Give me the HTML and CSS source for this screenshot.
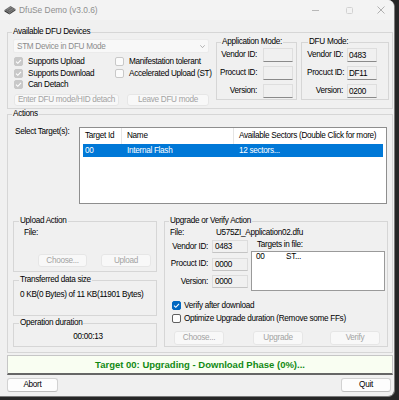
FILE: index.html
```html
<!DOCTYPE html>
<html lang="en">
<head>
<meta charset="utf-8">
<title>DfuSe Demo (v3.0.6)</title>
<link rel="stylesheet" href="styles.css">
</head>
<body>
<div class="window">
  <div class="titlebar">
    <svg class="app-icon" width="12" height="10" viewBox="0 0 12 10">
      <polygon points="0.5,5 6.5,1 11.5,4 5.5,8" fill="#6a6a6a"/>
      <polygon points="0.5,5 5.5,8 5.5,9.5 0.5,6.5" fill="#3a3a3a"/>
      <polygon points="5.5,8 11.5,4 11.5,5.5 5.5,9.5" fill="#4a4a4a"/>
      <path d="M3 4.6L7 2.1M5 5.9L9 3.4" stroke="#9a9a9a" stroke-width="0.6"/>
    </svg>
    <span class="title">DfuSe Demo (v3.0.6)</span>
    <div class="wincontrols">
      <svg class="wc-min" width="7" height="1" viewBox="0 0 7 1"><rect width="7" height="1" fill="#b8b8b8"/></svg>
      <svg class="wc-max" width="7" height="7" viewBox="0 0 7 7"><rect x="0.5" y="0.5" width="6" height="6" rx="1" fill="none" stroke="#d2d2d2"/></svg>
      <svg class="wc-close" width="8" height="8" viewBox="0 0 8 8"><path d="M0.5 0.5L7.5 7.5M7.5 0.5L0.5 7.5" stroke="#a8a8a8" stroke-width="0.9"/></svg>
    </div>
  </div>

  <div class="content">
    <fieldset class="group devices">
      <legend>Available DFU Devices</legend>
      <div class="devices-row">
        <div class="dev-left">
          <div class="combo">
            <span>STM Device in DFU Mode</span>
            <svg width="5" height="3" viewBox="0 0 5 3"><path d="M0.3 0.3L2.5 2.6L4.7 0.3" fill="none" stroke="#a0a0a0" stroke-width="0.8"/></svg>
          </div>
          <div class="checks">
            <div class="check"><span class="box box-dis"><svg width="7" height="7" viewBox="0 0 7 7"><path d="M1 3.6L2.8 5.3L6 1.8" fill="none" stroke="#fff" stroke-width="1.1"/></svg></span>Supports Upload</div>
            <div class="check"><span class="box"></span>Manifestation tolerant</div>
            <div class="check"><span class="box box-dis"><svg width="7" height="7" viewBox="0 0 7 7"><path d="M1 3.6L2.8 5.3L6 1.8" fill="none" stroke="#fff" stroke-width="1.1"/></svg></span>Supports Download</div>
            <div class="check"><span class="box"></span>Accelerated Upload (ST)</div>
            <div class="check"><span class="box box-dis"><svg width="7" height="7" viewBox="0 0 7 7"><path d="M1 3.6L2.8 5.3L6 1.8" fill="none" stroke="#fff" stroke-width="1.1"/></svg></span>Can Detach</div>
          </div>
          <div class="dev-buttons">
            <button class="btn btn-dis btn-enter" disabled>Enter DFU mode/HID detach</button>
            <button class="btn btn-dis btn-leave" disabled>Leave DFU mode</button>
          </div>
        </div>

        <fieldset class="group mode appmode">
          <legend>Application Mode:</legend>
          <div class="mode-grid">
            <span class="lbl">Vendor ID:</span><span class="field"></span>
            <span class="lbl">Procuct ID:</span><span class="field"></span>
            <span class="lbl">Version:</span><span class="field"></span>
          </div>
        </fieldset>

        <fieldset class="group mode dfumode">
          <legend>DFU Mode:</legend>
          <div class="mode-grid">
            <span class="lbl">Vendor ID:</span><span class="field">0483</span>
            <span class="lbl">Procuct ID:</span><span class="field">DF11</span>
            <span class="lbl">Version:</span><span class="field">0200</span>
          </div>
        </fieldset>
      </div>
    </fieldset>

    <fieldset class="group actions">
      <legend>Actions</legend>
      <div class="target-row">
        <span class="select-label">Select Target(s):</span>
        <div class="listbox">
          <div class="lb-head">
            <span>Target Id</span><span>Name</span><span>Available Sectors (Double Click for more)</span>
          </div>
          <div class="lb-row selected">
            <span>00</span><span>Internal Flash</span><span>12 sectors...</span>
          </div>
        </div>
      </div>

      <div class="lower-row">
        <div class="lower-left">
          <fieldset class="group upload">
            <legend>Upload Action</legend>
            <div class="upload-inner">
              <div class="line">File:</div>
              <div class="upload-buttons">
                <button class="btn btn-dis btn-choose" disabled>Choose...</button>
                <button class="btn btn-dis btn-upload" disabled>Upload</button>
              </div>
            </div>
          </fieldset>
          <fieldset class="group transferred">
            <legend>Transferred data size</legend>
            <div class="transferred-inner line">0 KB(0 Bytes) of 11 KB(11901 Bytes)</div>
          </fieldset>
          <fieldset class="group duration">
            <legend>Operation duration</legend>
            <div class="duration-inner line">00:00:13</div>
          </fieldset>
        </div>

        <fieldset class="group upgrade">
          <legend>Upgrade or Verify Action</legend>
          <div class="upgrade-inner">
            <div class="file-line line"><span class="file-lbl">File:</span><span>U575ZI_Application02.dfu</span></div>
            <div class="upgrade-mid">
              <div class="up-grid">
                <span class="lbl">Vendor ID:</span><span class="field">0483</span>
                <span class="lbl">Procuct ID:</span><span class="field">0000</span>
                <span class="lbl">Version:</span><span class="field">0000</span>
              </div>
              <div class="targets">
                <div class="line targets-lbl">Targets in file:</div>
                <div class="targets-box">
                  <div class="targets-row"><span>00</span><span>ST...</span></div>
                </div>
              </div>
            </div>
            <div class="opt-row verify-row"><span class="box box-on"><svg width="7" height="7" viewBox="0 0 7 7"><path d="M1 3.6L2.8 5.3L6 1.8" fill="none" stroke="#fff" stroke-width="1.1"/></svg></span>Verify after download</div>
            <div class="opt-row optimize-row"><span class="box box-off"></span>Optimize Upgrade duration (Remove some FFs)</div>
            <div class="upgrade-buttons">
              <button class="btn btn-dis" disabled>Choose...</button>
              <button class="btn btn-dis btn-gap1" disabled>Upgrade</button>
              <button class="btn btn-dis btn-gap2" disabled>Verify</button>
            </div>
          </div>
        </fieldset>
      </div>
    </fieldset>

    <div class="status">Target 00: Upgrading - Download Phase (0%)...</div>

    <div class="bottom-row">
      <button class="btn btn-abort">Abort</button>
      <button class="btn btn-quit">Quit</button>
    </div>
  </div>
</div>
</body>
</html>
```

FILE: styles.css
```css
* { box-sizing: border-box; }

html, body {
  margin: 0;
  padding: 0;
}

body {
  width: 399px;
  height: 400px;
  overflow: hidden;
  background: #262626;
  font-family: "Liberation Sans", Arial, sans-serif;
  font-size: 8.2px;
  letter-spacing: -0.3px;
  color: #000;
}

.window {
  width: 395px;
  height: 397px;
  background: #f0f0f0;
  border-right: 1px solid #7a7a7a;
  border-bottom: 1px solid #7a7a7a;
  border-radius: 0 7px 7px 0;
  overflow: hidden;
}

/* ---------- title bar ---------- */
.titlebar {
  height: 20px;
  background: #f3f3f3;
  display: flex;
  align-items: center;
}

.app-icon { margin-left: 4px; display: block; }

.title {
  margin-left: 3px;
  font-size: 8.4px;
  letter-spacing: 0;
  color: #8f8f8f;
}

.wincontrols {
  margin-left: auto;
  padding-right: 9px;
  display: flex;
  align-items: center;
}
.wincontrols svg { display: block; }
.wc-max { margin-left: 27px; }
.wc-close { margin-left: 24px; }

/* ---------- generic ---------- */
.content {
  padding: 7px 0 0 7px;
}

.group {
  margin: 0;
  padding: 0;
  border: 1px solid #d6d6d6;
  min-width: 0;
}

.group > legend {
  padding: 0 1px;
  margin-left: 4px;
  height: 10px;
  line-height: 10px;
  font-size: 8.2px;
  white-space: nowrap;
}

.line {
  height: 10px;
  line-height: 10px;
  white-space: nowrap;
}

.btn {
  margin: 0;
  padding: 0;
  font-family: inherit;
  font-size: 8.2px;
  letter-spacing: -0.3px;
  line-height: 10px;
  color: #000;
  background: #fdfdfd;
  border: 1px solid #d2d2d2;
  border-bottom-color: #bdbdbd;
  border-radius: 3px;
  white-space: nowrap;
}

.btn-dis {
  background: #f8f8f8;
  border-color: #e6e6e6;
  color: #a3a3a3;
}

.box {
  width: 9px;
  height: 9px;
  flex: none;
  border-radius: 2px;
  border: 1px solid #c8c8c8;
  background: #fbfbfb;
  display: flex;
  align-items: center;
  justify-content: center;
}
.box svg { display: block; }
.box-dis { background: #c8c8c8; border-color: #c8c8c8; }
.box-on { background: #0067c0; border-color: #0067c0; }
.box-off { background: #fdfdfd; border-color: #5f5f5f; }

.field {
  height: 14px;
  background: #f0f0f0;
  border: 1px solid #dedede;
  border-bottom-color: #8a8a8a;
  padding-left: 1px;
  display: flex;
  align-items: center;
}

.lbl {
  text-align: right;
  white-space: nowrap;
  align-self: center;
  line-height: 10px;
}

/* ---------- available devices ---------- */
.devices {
  width: 386px;
  height: 82px;
}

.devices-row {
  display: flex;
  align-items: flex-start;
  padding-left: 5px;
}

.dev-left {
  width: 197px;
  margin-right: 6px;
  padding-top: 2px;
}

.combo {
  width: 196px;
  height: 14px;
  background: #f8f8f8;
  border: 1px solid #ebebeb;
  border-radius: 2px;
  display: flex;
  align-items: center;
  justify-content: space-between;
  padding: 0 3px 0 3px;
  color: #8c8c8c;
}
.combo svg { display: block; }

.checks {
  display: grid;
  grid-template-columns: 101px auto;
  grid-auto-rows: 11.5px;
  margin-top: 3px;
  margin-left: 1px;
}

.check {
  display: flex;
  align-items: center;
  white-space: nowrap;
}
.check .box { margin-right: 5px; }

.dev-buttons {
  display: flex;
  margin-top: 3.5px;
  margin-left: 1px;
}
.dev-buttons .btn { height: 12px; }
.btn-enter { width: 105px; }
.btn-leave { width: 82px; margin-left: 8px; }

.mode {
  height: 63px;
}
.appmode { width: 81px; margin-right: 4px; }
.dfumode { width: 88px; }
.dfumode > legend { margin-left: 6px; }

.mode-grid {
  display: grid;
  grid-auto-rows: 14px;
  row-gap: 4px;
  padding-top: 1px;
}
.appmode .mode-grid {
  grid-template-columns: 37px 30px;
  column-gap: 6px;
  padding-left: 3px;
}
.dfumode .mode-grid {
  grid-template-columns: 36px 30px;
  column-gap: 4px;
  padding-left: 5px;
}

/* ---------- actions ---------- */
.actions {
  width: 386px;
  height: 244px;
}

.target-row {
  display: flex;
  align-items: flex-start;
  margin-top: 8px;
  padding-left: 7px;
}

.select-label {
  width: 64px;
  line-height: 10px;
  white-space: nowrap;
}

.listbox {
  width: 308px;
  height: 77px;
  background: #fff;
  border: 1px solid #8e8e8e;
}

.lb-head {
  display: grid;
  grid-template-columns: 42px 112px 1fr;
  height: 16px;
}
.lb-head span {
  padding-left: 5px;
  line-height: 16px;
  white-space: nowrap;
  border-right: 1px solid #e5e5e5;
}
.lb-head span:last-child { border-right: none; }

.lb-row {
  display: grid;
  grid-template-columns: 39px 112px 1fr;
  height: 13px;
  margin: 0 3px;
  line-height: 13px;
  white-space: nowrap;
}
.lb-row span { padding-left: 5px; }
.lb-row span:first-child { padding-left: 2px; }
.lb-row.selected { background: #0078d7; color: #fff; }

.lower-row {
  display: flex;
  align-items: flex-start;
  margin-top: 12px;
  padding-left: 5px;
}

.lower-left {
  width: 144px;
  margin-right: 7px;
  display: flex;
  flex-direction: column;
}
.lower-left .group > legend { margin-left: 5px; }

.upload { height: 56px; }
.upload-inner { padding: 2px 0 0 10px; }
.upload-buttons {
  display: flex;
  margin-top: 16px;
  margin-left: 14px;
}
.upload-buttons .btn { height: 13px; }
.btn-choose { width: 49px; }
.btn-upload { width: 50px; margin-left: 14px; }

.transferred { height: 41px; margin-top: 3px; }
.transferred-inner { padding: 0 0 0 6px; margin-top: 5px; height: 10px; }

.duration { height: 29px; margin-top: 2px; }
.duration-inner { margin-top: 4px; padding-left: 6px; text-align: center; }

.upgrade {
  width: 224px;
  height: 131px;
}

.upgrade-inner { padding: 2px 2px 0 5px; }

.file-line { display: flex; }
.file-lbl { width: 46px; }

.upgrade-mid {
  display: flex;
  align-items: flex-start;
  margin-top: 2px;
}

.up-grid {
  display: grid;
  grid-template-columns: 38px 36px;
  column-gap: 4px;
  grid-auto-rows: 13px;
  row-gap: 4.5px;
}
.up-grid .field {
  height: 13px;
  border-color: #dcdcdc;
  border-bottom-color: #c4c4c4;
  padding-left: 2px;
}

.targets {
  margin-left: 3px;
  width: 134px;
}
.targets-lbl { padding-left: 6px; }
.targets-box {
  height: 40px;
  margin-top: 1px;
  background: #fff;
  border: 1px solid #9a9a9a;
}
.targets-row {
  display: grid;
  grid-template-columns: 30px 1fr;
  padding-left: 4px;
  line-height: 10px;
}

.opt-row {
  display: flex;
  align-items: center;
  height: 10px;
  padding-left: 2px;
  white-space: nowrap;
}
.opt-row .box { margin-right: 3px; }
.verify-row { margin-top: 9px; }
.optimize-row { margin-top: 3px; }

.upgrade-buttons {
  display: flex;
  margin-top: 8px;
  padding-left: 4px;
}
.upgrade-buttons .btn { width: 50px; height: 14px; }
.btn-gap1 { margin-left: 29px; }
.btn-gap2 { margin-left: 27px; }

/* ---------- status ---------- */
.status {
  width: 386px;
  height: 20px;
  margin-top: 2px;
  background: #f9fef2;
  border: 1px solid #c6c6c6;
  border-bottom: 2px solid #666;
  text-align: center;
  line-height: 18px;
  font-weight: bold;
  font-size: 9.5px;
  letter-spacing: 0;
  color: #118a14;
  white-space: nowrap;
}

.bottom-row {
  width: 384px;
  display: flex;
  justify-content: space-between;
  margin-top: 3px;
}
.bottom-row .btn { height: 14px; }
.btn-abort { width: 51px; }
.btn-quit { width: 50px; }
```
